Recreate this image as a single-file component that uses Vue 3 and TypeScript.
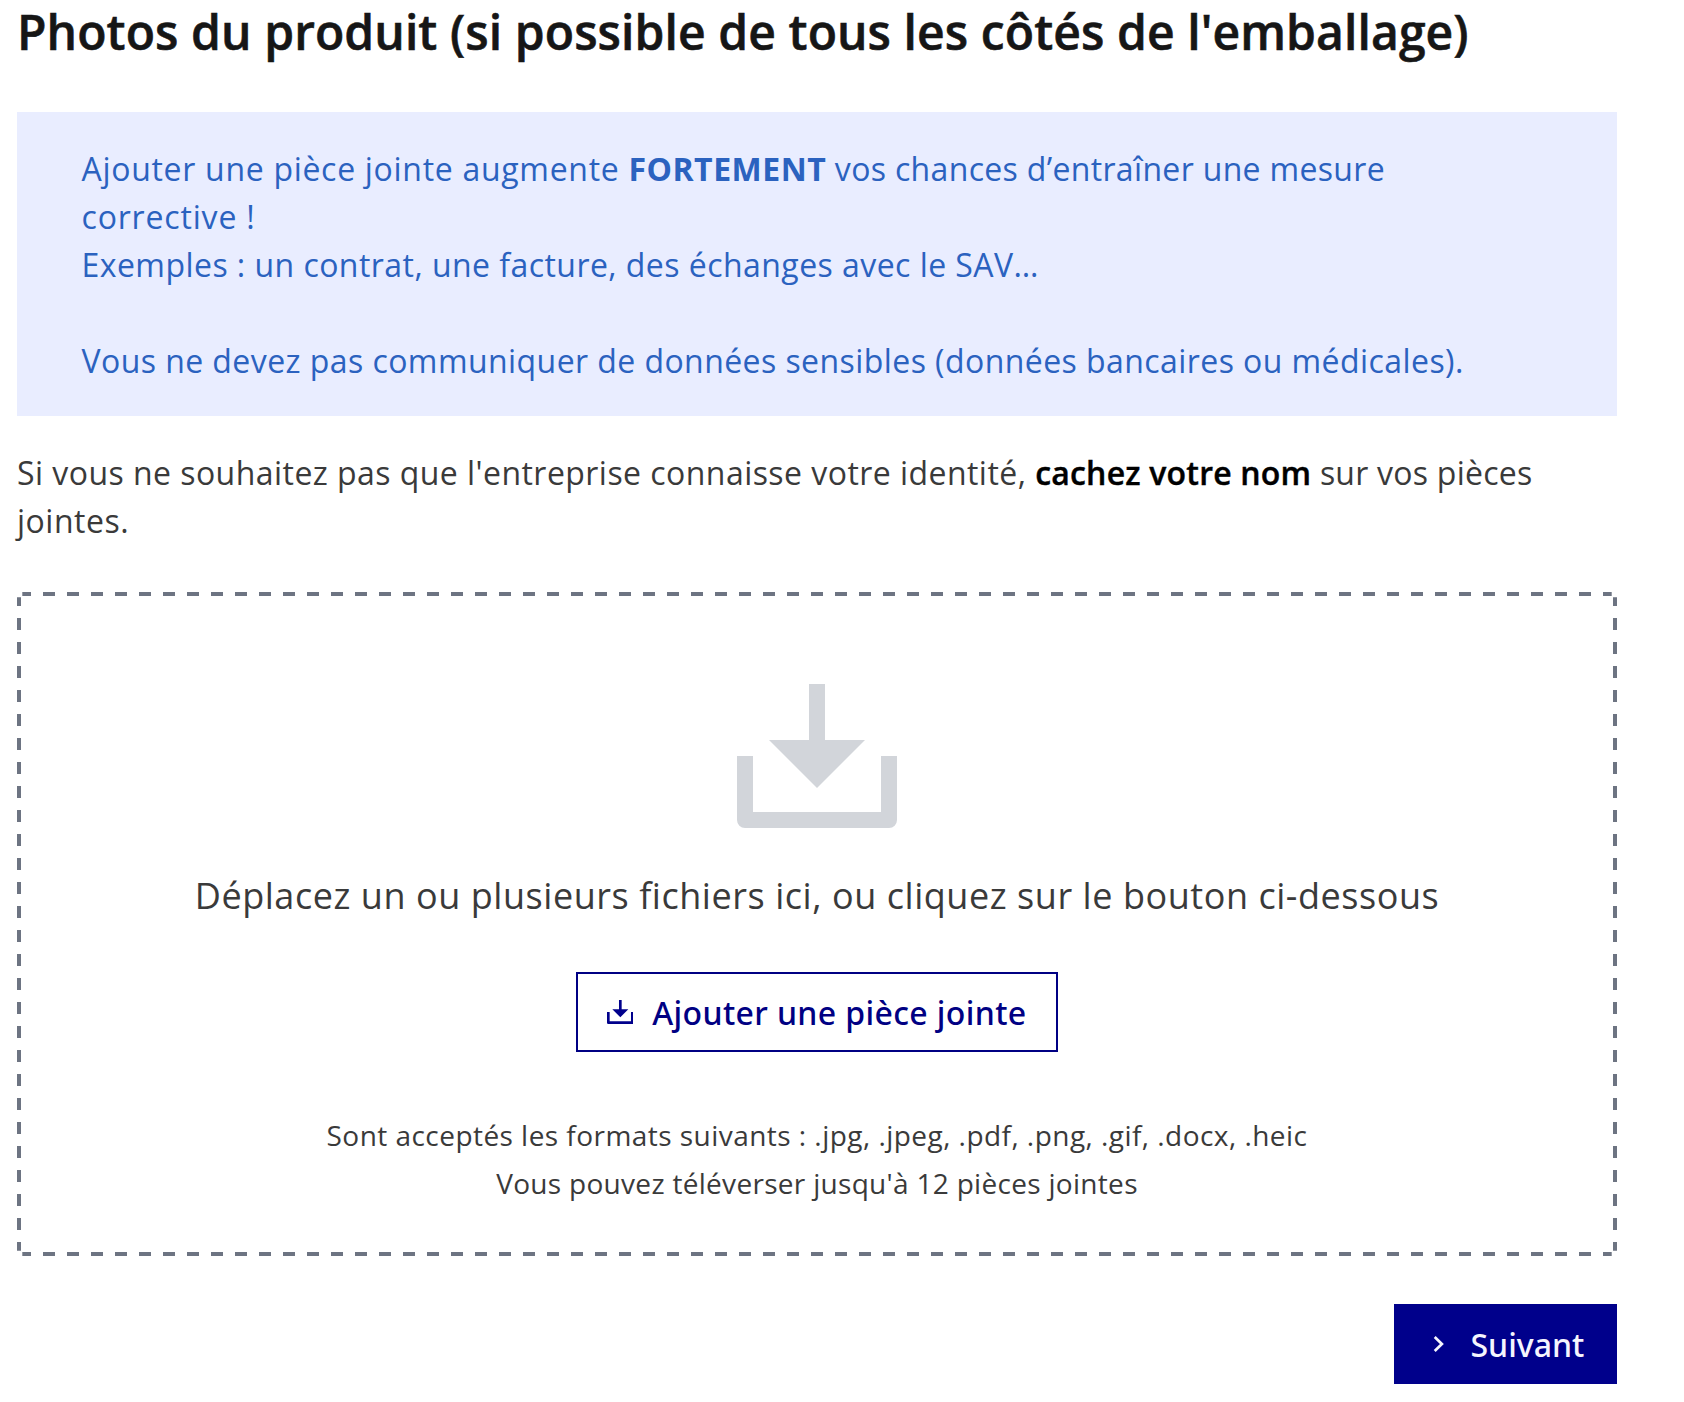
<script setup lang="ts">
const formats: string[] = ['.jpg', '.jpeg', '.pdf', '.png', '.gif', '.docx', '.heic']
const maxFiles = 12
</script>

<template>
  <main class="step">
    <h2 class="title">Photos du produit (si possible de tous les côtés de l'emballage)</h2>

    <div class="notice">
      <span class="n1">Ajouter une pièce jointe augmente </span><strong>FORTEMENT</strong><span class="n2"> vos chances d’entraîner une mesure</span><br />
      <span class="n3">corrective !</span><br />
      <span class="n4">Exemples : un contrat, une facture, des échanges avec le SAV…</span><br />
      <br />
      <span class="n5">Vous ne devez pas communiquer de données sensibles (données bancaires ou médicales).</span>
    </div>

    <p class="privacy">
      <span class="p1">Si vous ne souhaitez pas que l'entreprise connaisse votre identité, </span><strong>cachez votre nom</strong><span class="p2"> sur vos pièces</span><br />
      <span class="p3">jointes.</span>
    </p>

    <section class="dropzone">
      <svg class="outline" width="1600" height="664" viewBox="0 0 1600 664" aria-hidden="true">
        <path d="M5.3 2H1594.7M5.3 662H1594.7M2 5.3V658.7M1598 5.3V658.7" />
      </svg>
      <div class="content">
        <svg class="tray" width="160" height="144" viewBox="0 0 160 144" aria-hidden="true">
          <path d="M72 0H88V56H128L80 104L32 56H72ZM0 72H16V128H144V72H160V136A8 8 0 0 1 152 144H8A8 8 0 0 1 0 136Z" />
        </svg>
        <p class="hint">Déplacez un ou plusieurs fichiers ici, ou cliquez sur le bouton ci-dessous</p>
        <button class="add" type="button">
          <svg width="26.67" height="24" viewBox="0 0 160 144" aria-hidden="true">
            <path d="M72 0H88V56H128L80 104L32 56H72ZM0 72H16V128H144V72H160V136A8 8 0 0 1 152 144H8A8 8 0 0 1 0 136Z" />
          </svg>
          <span>Ajouter une pièce jointe</span>
        </button>
        <div class="limits">
          <p class="l1">Sont acceptés les formats suivants : {{ formats.join(', ') }}</p>
          <p class="l2">Vous pouvez téléverser jusqu'à {{ maxFiles }} pièces jointes</p>
        </div>
      </div>
    </section>

    <div class="actions">
      <button class="next" type="button">
        <svg width="12" height="18" viewBox="0 0 12 18" aria-hidden="true">
          <path d="M1.7 2L8.9 9L1.7 16" />
        </svg>
        <span>Suivant</span>
      </button>
    </div>
  </main>
</template>

<style>
body {
  background: #fff;
}
</style>

<style scoped>
.step {
  display: flex;
  flex-direction: column;
  box-sizing: border-box;
  width: 1617px;
  padding: 4px 0 18px 17px;
  font: 400 32px/48px 'Open Sans', 'Noto Sans', sans-serif;
  color: #3a3a3a;
  white-space: nowrap;
}

.title {
  margin: 0 0 52px;
  font-size: 48px;
  font-weight: 600;
  line-height: 56px;
  letter-spacing: 0.09px;
  color: #161616;
  -webkit-text-stroke: 0.6px #161616;
}

.notice {
  padding: 33px 64px 31px 64.5px;
  background: #e9edff;
  color: #2b62bf;
}
.notice strong {
  font-weight: 700;
  letter-spacing: 0.5px;
}
.n1 { letter-spacing: 0.7px; }
.n2 { letter-spacing: 0.33px; }
.n3 { letter-spacing: 0.82px; }
.n4 { letter-spacing: 0.45px; }
.n5 { letter-spacing: 0.43px; }

.privacy {
  margin: 33px 0 47px;
}
.privacy strong {
  font-weight: 600;
  letter-spacing: 0.2px;
  color: #000;
  -webkit-text-stroke: 0.4px #000;
}
.p1 { letter-spacing: 0.45px; }
.p2 { letter-spacing: 0.24px; }
.p3 { letter-spacing: 0.5px; }

.dropzone {
  display: grid;
  width: 1600px;
  height: 664px;
}
.outline,
.content {
  grid-area: 1 / 1;
}
.outline path {
  fill: none;
  stroke: #6d7482;
  stroke-width: 4;
  stroke-dasharray: 12;
  stroke-dashoffset: 3.3;
}
.content {
  display: flex;
  flex-direction: column;
  align-items: center;
  padding-top: 92px;
}
.tray {
  fill: #d2d5da;
}
.hint {
  margin: 40px 0 48px;
  font-size: 36px;
  line-height: 56px;
  letter-spacing: 0.55px;
}

button {
  display: flex;
  align-items: center;
  box-sizing: border-box;
  height: 80px;
  margin: 0;
  border: 0;
  border-radius: 0;
  font: 500 32px/48px 'Noto Sans', sans-serif;
}
button span {
  padding-top: 1px;
}
.add {
  gap: 19px;
  width: 482px;
  padding: 0 0 0 28.5px;
  border: 2px solid #000083;
  background: #fff;
  color: #000083;
  letter-spacing: 0.38px;
}
.add svg {
  flex: none;
  fill: #00008c;
}

.limits {
  margin-top: 59px;
  font-size: 28px;
  text-align: center;
}
.limits p {
  margin: 0;
}
.l1 { letter-spacing: 0.457px; }
.l2 { letter-spacing: 0.304px; }

.actions {
  display: flex;
  justify-content: flex-end;
  margin-top: 48px;
}
.next {
  gap: 26px;
  width: 223px;
  padding: 0 0 0 38.5px;
  background: #00008b;
  color: #f5f5fe;
}
.next path {
  fill: none;
  stroke: #f5f5fe;
  stroke-width: 2.7;
}
</style>
